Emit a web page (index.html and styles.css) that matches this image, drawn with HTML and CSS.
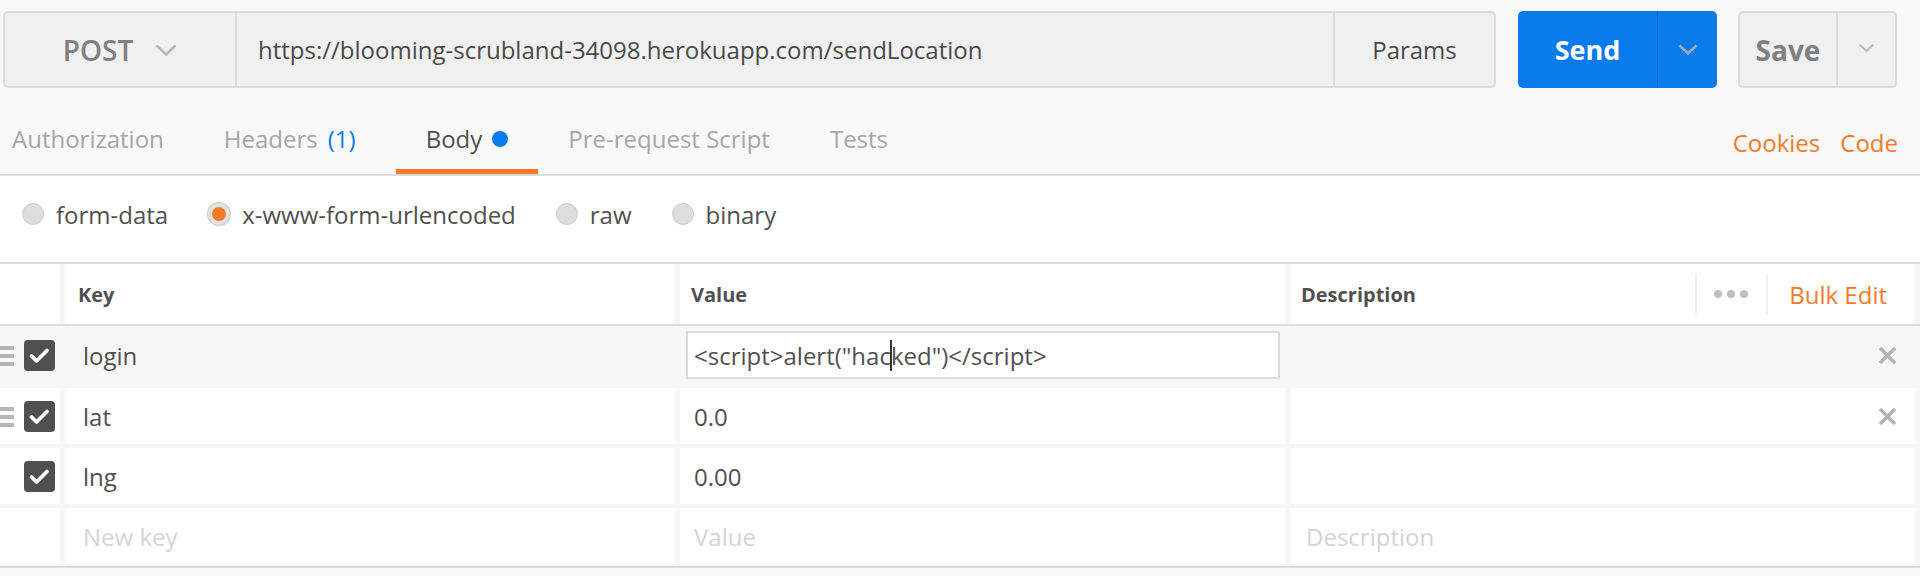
FILE: index.html
```html
<!DOCTYPE html>
<html lang="en">
<head>
<meta charset="utf-8">
<title>Postman request</title>
<link rel="stylesheet" href="styles.css">
</head>
<body>
<div class="topbar">
  <div class="request">
    <div class="method">
      <span>POST</span>
      <svg class="chev" width="22" height="12" viewBox="0 0 22 12"><polyline points="1.5,1.5 11,10.5 20.5,1.5" fill="none" stroke="#b8b8b8" stroke-width="2.6"/></svg>
    </div>
    <div class="url">https://blooming-scrubland-34098.herokuapp.com/sendLocation</div>
    <div class="params">Params</div>
  </div>
  <div class="send">
    <div class="send-main">Send</div>
    <div class="send-drop">
      <svg width="20" height="11" viewBox="0 0 20 11"><polyline points="1.5,1.5 10,9.5 18.5,1.5" fill="none" stroke="#a3aab2" stroke-width="2.6"/></svg>
    </div>
  </div>
  <div class="save">
    <div class="save-main">Save</div>
    <div class="save-drop">
      <svg width="17" height="10" viewBox="0 0 17 10"><polyline points="1.5,1.5 8.5,8 15.5,1.5" fill="none" stroke="#bdbdbd" stroke-width="2.2"/></svg>
    </div>
  </div>
</div>

<div class="tabs">
  <div class="tab first">Authorization</div>
  <div class="tab">Headers <span class="count">(1)</span></div>
  <div class="tab active">Body <span class="dot"></span></div>
  <div class="tab">Pre-request Script</div>
  <div class="tab">Tests</div>
  <div class="tab-links"><span>Cookies</span><span>Code</span></div>
</div>

<div class="body-types">
  <label class="radio"><span class="circle"></span>form-data</label>
  <label class="radio"><span class="circle on"></span>x-www-form-urlencoded</label>
  <label class="radio"><span class="circle"></span>raw</label>
  <label class="radio"><span class="circle"></span>binary</label>
</div>

<div class="kv">
  <div class="kv-head">
    <div class="cell"></div>
    <div class="cell hcell hkey">Key</div>
    <div class="cell hcell">Value</div>
    <div class="cell hcell desc-head">
      <span>Description</span>
      <span class="vsep"></span>
      <span class="more"><i></i><i></i><i></i></span>
      <span class="vsep"></span>
      <span class="bulk">Bulk Edit</span>
    </div>
  </div>

  <div class="kv-row hover">
    <div class="cell ctl"><span class="handle"><i></i><i></i><i></i></span><span class="check"><svg width="31" height="31" viewBox="0 0 31 31"><polyline points="7.5,16 12.5,21 23,10.5" fill="none" stroke="#fff" stroke-width="3.8" stroke-linecap="round" stroke-linejoin="round"/></svg></span></div>
    <div class="cell key">login</div>
    <div class="cell val"><div class="edit">&lt;script&gt;alert("hac<span class="caret"></span>ked")&lt;/script&gt;</div></div>
    <div class="cell desc"><svg class="del" width="19" height="19" viewBox="0 0 19 19"><path d="M2 2 L17 17 M17 2 L2 17" stroke="#b3b3b3" stroke-width="3.6"/></svg></div>
  </div>

  <div class="kv-row">
    <div class="cell ctl"><span class="handle"><i></i><i></i><i></i></span><span class="check"><svg width="31" height="31" viewBox="0 0 31 31"><polyline points="7.5,16 12.5,21 23,10.5" fill="none" stroke="#fff" stroke-width="3.8" stroke-linecap="round" stroke-linejoin="round"/></svg></span></div>
    <div class="cell key">lat</div>
    <div class="cell val">0.0</div>
    <div class="cell desc"><svg class="del" width="19" height="19" viewBox="0 0 19 19"><path d="M2 2 L17 17 M17 2 L2 17" stroke="#b3b3b3" stroke-width="3.6"/></svg></div>
  </div>

  <div class="kv-row">
    <div class="cell ctl"><span class="handle blank"></span><span class="check"><svg width="31" height="31" viewBox="0 0 31 31"><polyline points="7.5,16 12.5,21 23,10.5" fill="none" stroke="#fff" stroke-width="3.8" stroke-linecap="round" stroke-linejoin="round"/></svg></span></div>
    <div class="cell key">lng</div>
    <div class="cell val">0.00</div>
    <div class="cell desc"></div>
  </div>

  <div class="kv-row last">
    <div class="cell ctl"></div>
    <div class="cell key ph">New key</div>
    <div class="cell val ph">Value</div>
    <div class="cell desc ph">Description</div>
  </div>
</div>
</body>
</html>
```

FILE: styles.css
```css
* { box-sizing: border-box; }

body {
  margin: 0;
  background: #f9f9f9;
  font-family: "Open Sans", "DejaVu Sans", sans-serif;
  color: #505050;
}

/* ---------- top bar ---------- */
.topbar {
  display: flex;
  padding: 11px 0 0 3px;
  height: 88px;
}

.request {
  display: flex;
  width: 1493px;
  height: 77px;
  border: 2px solid #dcdcdc;
  border-radius: 5px;
  background: #f0f0f0;
}

.method {
  width: 232px;
  display: flex;
  align-items: center;
  justify-content: center;
  gap: 22px;
  border-right: 2px solid #dcdcdc;
  font-size: 28px;
  font-weight: 600;
  color: #808080;
}

.url {
  flex: 1;
  display: flex;
  align-items: center;
  padding-left: 21px;
  font-size: 24px;
  color: #4a4a4a;
}

.params {
  width: 161px;
  display: flex;
  align-items: center;
  justify-content: center;
  border-left: 2px solid #dcdcdc;
  font-size: 24px;
  color: #4a4a4a;
}

.send {
  display: flex;
  margin-left: 22px;
  width: 199px;
  height: 77px;
  background: #097bed;
  border-radius: 5px;
}

.send-main {
  flex: 1;
  display: flex;
  align-items: center;
  justify-content: center;
  color: #fff;
  font-size: 27px;
  font-weight: 700;
}

.send-drop {
  width: 60px;
  display: flex;
  align-items: center;
  justify-content: center;
  border-left: 1px solid #0b67c6;
}

.save {
  display: flex;
  margin-left: 21px;
  width: 159px;
  height: 77px;
  border: 2px solid #dcdcdc;
  border-radius: 5px;
  background: #f0f0f0;
}

.save-main {
  flex: 1;
  display: flex;
  align-items: center;
  justify-content: center;
  color: #808080;
  font-size: 28px;
  font-weight: 700;
}

.save-drop {
  width: 59px;
  display: flex;
  align-items: center;
  justify-content: center;
  border-left: 2px solid #dcdcdc;
  padding-bottom: 4px;
}

/* ---------- tabs ---------- */
.tabs {
  display: flex;
  height: 88px;
  border-bottom: 2px solid #dcdcdc;
}

.tab {
  position: relative;
  display: flex;
  align-items: center;
  padding: 14px 30px 0;
  font-size: 24px;
  color: #a6a6a6;
}

.tab.first { padding-left: 12px; }

.tab .count {
  color: #097bed;
  margin-left: 10px;
  margin-right: 10px;
}

.tab.active { color: #505050; }

.tab.active::after {
  content: "";
  position: absolute;
  left: 0;
  right: 0;
  bottom: 0;
  height: 5px;
  background: #f47a2c;
}

.dot {
  width: 16px;
  height: 16px;
  margin-left: 10px;
  margin-top: 2px;
  border-radius: 50%;
  background: #097bed;
}

.tab-links {
  margin-left: auto;
  display: flex;
  align-items: center;
  gap: 20px;
  padding: 22px 22px 0 0;
  font-size: 24px;
  color: #f47a2c;
}

/* ---------- body types ---------- */
.body-types {
  display: flex;
  align-items: center;
  height: 88px;
  padding: 0 0 10px 22px;
  background: #fff;
  border-bottom: 2px solid #dcdcdc;
}

.radio {
  display: flex;
  align-items: center;
  margin-right: 40px;
  font-size: 24px;
  color: #505050;
}

.circle {
  width: 22px;
  height: 22px;
  margin-right: 12px;
  border-radius: 50%;
  background: #dedede;
  border: 1px solid #cccccc;
}

.circle.on {
  background: #f47a2c;
  border: 4px solid #e2e2e2;
  box-shadow: 0 0 0 1px #c9c9c9;
}

/* ---------- key/value table ---------- */
.kv {
  background: #fff;
  border-bottom: 2px solid #dcdcdc;
}

.kv-head,
.kv-row {
  display: grid;
  grid-template-columns: 60px 610px 605px 625px;
  column-gap: 5px;
  padding-right: 5px;
  background: #f6f6f6;
}

.kv-head {
  height: 62px;
  border-bottom: 2px solid #dcdcdc;
}

.cell {
  background: #fff;
  display: flex;
  align-items: center;
  min-width: 0;
}

.hcell {
  padding-left: 11px;
  font-size: 20px;
  font-weight: 700;
  color: #505050;
}

.hcell.hkey { padding-left: 13px; }

.desc-head { padding-right: 28px; }
.desc-head > span:first-child { margin-right: auto; }

.vsep {
  width: 2px;
  height: 41px;
  background: #f0f0f0;
}

.more {
  display: flex;
  gap: 5px;
  padding: 0 18px 0 17px;
}

.more i {
  width: 8px;
  height: 8px;
  border-radius: 50%;
  background: #bdbdbd;
}

.bulk {
  padding-left: 21px;
  font-size: 24px;
  font-weight: 400;
  color: #f47a2c;
}

.kv-row {
  height: 60px;
  padding-bottom: 4px;
}

.kv-row.hover {
  height: 62px;
  background: #f7f7f7;
}

.kv-row.hover .cell { background: transparent; }

.kv-row.last {
  height: 58px;
  padding-bottom: 2px;
}

.key,
.val,
.desc {
  font-size: 24px;
  color: #505050;
}

.key { padding-left: 18px; }
.val { padding-left: 14px; }
.desc { padding-left: 16px; padding-right: 18px; justify-content: flex-end; }
.desc.ph { justify-content: flex-start; }

.ph { color: #d4d4d4; }

.ctl { padding-top: 1px; }

.handle {
  display: flex;
  flex-direction: column;
  gap: 4px;
  width: 14px;
  margin-right: 10px;
}

.handle i {
  display: block;
  height: 4px;
  background: #b5b5b5;
}

.handle.blank { height: 1px; }

.check {
  display: flex;
  width: 31px;
  height: 31px;
  border-radius: 4px;
  background: #505050;
}

.val .edit {
  flex: 1;
  margin: 0 5px 0 -8px;
  height: 48px;
  display: flex;
  align-items: center;
  padding-left: 6px;
  background: #fff;
  border: 2px solid #dcdcdc;
}

.caret {
  display: inline-block;
  width: 2px;
  height: 31px;
  margin: 0 -1px;
  background: #333;
}
```
